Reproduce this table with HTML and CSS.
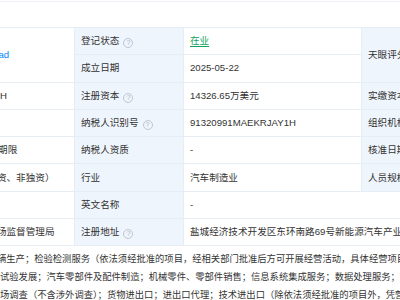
FILE: index.html
```html
<!DOCTYPE html>
<html lang="zh-CN">
<head>
<meta charset="utf-8">
<title>工商信息</title>
<link rel="stylesheet" href="styles.css">
</head>
<body>
<div class="page">
  <div class="topbar"></div>
  <div class="viewport">
    <table class="info">
      <colgroup>
        <col class="c0"><col class="c1"><col class="c2"><col class="c3">
      </colgroup>
      <tr>
        <td class="val" rowspan="2"><span class="avatar">康</span><span class="link">Bernhard Konrad</span></td>
        <td class="lbl">登记状态<span class="q">?</span></td>
        <td class="val"><span class="status">在业</span></td>
        <td class="lbl" rowspan="2">天眼评分</td>
      </tr>
      <tr>
        <td class="lbl">成立日期</td>
        <td class="val">2025-05-22</td>
      </tr>
      <tr>
        <td class="val">91320991MAEKRJAY1H</td>
        <td class="lbl">注册资本<span class="q">?</span></td>
        <td class="val">14326.65万美元</td>
        <td class="lbl">实缴资本</td>
      </tr>
      <tr>
        <td class="val"></td>
        <td class="lbl">纳税人识别号<span class="q">?</span></td>
        <td class="val">91320991MAEKRJAY1H</td>
        <td class="lbl">组织机构代码</td>
      </tr>
      <tr>
        <td class="val">2025-05-22至今无固定期限</td>
        <td class="lbl">纳税人资质</td>
        <td class="val">-</td>
        <td class="lbl">核准日期</td>
      </tr>
      <tr>
        <td class="val">有限责任公司（外商投资、非独资）</td>
        <td class="lbl">行业</td>
        <td class="val">汽车制造业</td>
        <td class="lbl">人员规模</td>
      </tr>
      <tr>
        <td class="val"></td>
        <td class="lbl">英文名称</td>
        <td class="val" colspan="2">-</td>
      </tr>
      <tr>
        <td class="val">盐城经济技术开发区市场监督管理局</td>
        <td class="lbl">注册地址<span class="q">?</span></td>
        <td class="val" colspan="2">盐城经济技术开发区东环南路69号新能源汽车产业园内</td>
      </tr>
    </table>
    <div class="scope">
      <div class="line first">辆生产；检验检测服务（依法须经批准的项目，经相关部门批准后方可开展经营活动，具体经营项目</div>
      <div class="line">试验发展；汽车零部件及配件制造；机械零件、零部件销售；信息系统集成服务；数据处理服务；软件</div>
      <div class="line">场调查（不含涉外调查）；货物进出口；进出口代理；技术进出口（除依法须经批准的项目外，凭营业</div>
    </div>
  </div>
</div>
</body>
</html>
```
FILE: styles.css
```css
html, body {
  margin: 0;
  padding: 0;
  background: #ffffff;
}

.page {
  width: 400px;
  height: 300px;
  overflow: hidden;
  font-family: "Liberation Sans", "Noto Sans CJK SC", sans-serif;
  font-size: 9.6px;
  color: #333333;
}

.topbar {
  margin-top: 1px;
  height: 25px;
  border-top: 1px solid #eceff3;
}

.viewport {
  width: 400px;
  overflow: hidden;
}

.info {
  margin-left: -106px;
  border-collapse: collapse;
  table-layout: fixed;
  width: 630px;
}

.c0 { width: 180px; }
.c1 { width: 109px; }
.c2 { width: 178px; }
.c3 { width: 163px; }

.info tr {
  height: 27.3px;
}

.info td {
  border: 1px solid #e6edf5;
  padding: 0 6px;
  vertical-align: middle;
  white-space: nowrap;
  overflow: hidden;
  line-height: 14px;
}

.info td.lbl {
  background: #eff5fc;
}

.avatar {
  display: inline-block;
  width: 32px;
  height: 32px;
  margin-right: 3px;
  border-radius: 4px;
  background: #f0b65a;
  color: #ffffff;
  text-align: center;
  line-height: 32px;
  font-size: 14px;
  vertical-align: middle;
}

.link {
  color: #0084ff;
  vertical-align: middle;
}

.status {
  color: #12a463;
  text-decoration: underline;
  text-underline-offset: 2px;
}

.q {
  display: inline-block;
  width: 8px;
  height: 8px;
  margin-left: 4px;
  border: 1px solid #bcc7d5;
  border-radius: 50%;
  color: #a9b6c6;
  font-size: 7px;
  line-height: 8px;
  text-align: center;
  vertical-align: -1px;
}

.scope {
  padding-top: 4px;
  font-size: 9.3px;
  line-height: 18px;
  color: #333333;
}

.line {
  white-space: nowrap;
}

.line.first {
  margin-left: -3px;
}
```
